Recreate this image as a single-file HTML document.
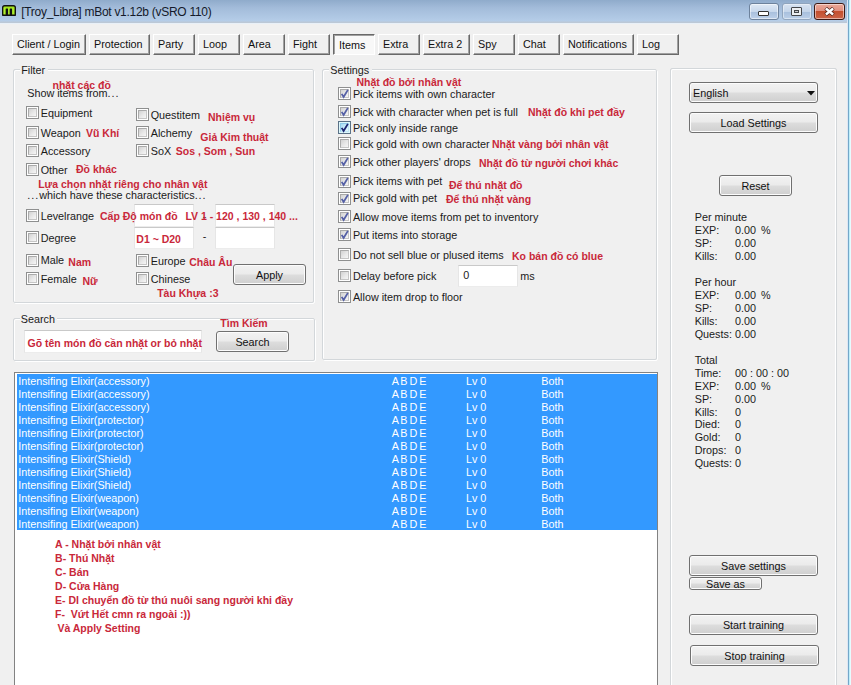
<!DOCTYPE html><html><head><meta charset="utf-8"><style>
*{margin:0;padding:0}
html,body{width:851px;height:685px;overflow:hidden;background:#f0f0f0}
body{position:relative;font-family:"Liberation Sans", sans-serif;}
.t{position:absolute;white-space:pre;}
#title{position:absolute;left:0;top:0;width:851px;height:24px;background:linear-gradient(180deg,#8fabcb 0px,#a3bcda 8px,#b5cde8 21px,#bcc8d6 22px,#bcc8d6 23px,#e8f0f8 23px,#e8f0f8 24px)}
.cap{position:absolute;top:3px;height:17px;border:1px solid #6d829c;border-radius:3px;box-sizing:border-box;background:linear-gradient(180deg,#dfe9f5 0%,#c8d8ec 50%,#a9c0dd 55%,#bdd1ea 100%);box-shadow:inset 0 0 0 1px rgba(255,255,255,.5)}
.cap.max{border-color:#8fa3bb;opacity:.9}
.cap.close{border-color:#3e1a14;background:linear-gradient(180deg,#eaa898 0%,#e09080 45%,#c4502f 50%,#cc6448 100%)}
.tab{position:absolute;box-sizing:border-box;background:#f0f0f0;border-top:1px solid #fff;border-left:1px solid #fff;border-right:1px solid #696969;border-bottom:1px solid #696969;box-shadow:inset -1px -1px 0 #a0a0a0}
.tab span{position:absolute;left:4px;top:0px;font-size:10.8px;line-height:19px;color:#111;white-space:pre}
.tab.pr{border-top:1px solid #696969;border-left:1px solid #696969;border-right:1px solid #fff;border-bottom:1px solid #fff;box-shadow:inset 1px 1px 0 #a0a0a0;background:#f8f8f8}
.tab.pr span{left:5px;top:1px}
.cb{position:absolute;width:13px;height:13px;box-sizing:border-box;border:1px solid #8e8f8f;background:#fff}
.cb::before{content:"";position:absolute;left:1px;top:1px;width:9px;height:9px;box-sizing:border-box;border:1px solid;border-color:#aaaaaa #c6c6c6 #c6c6c6 #aaaaaa;background:linear-gradient(135deg,#d2d2d2 0%,#e8e8e8 55%,#f6f6f6 100%)}
.cb svg{position:absolute;left:-1px;top:-1px}
.cb.hot{border-color:#5b7287;background:#def7fb}
.cb.hot::before{border-color:#8fcbe8 #c0e6f6 #c0e6f6 #8fcbe8;background:linear-gradient(135deg,#a6daf4 0%,#cdeefa 55%,#e6f8fd 100%)}
.btn{position:absolute;box-sizing:border-box;border:1px solid #707070;border-radius:3px;background:linear-gradient(180deg,#f2f2f2 0%,#ebebeb 48%,#dddddd 52%,#cfcfcf 100%);box-shadow:inset 0 0 0 1px #fcfcfc}
.btn span{position:absolute;left:0;right:0;top:1px;text-align:center;font-size:10.8px;color:#111;white-space:pre}
</style></head><body>
<div id="title"></div>
<svg style="position:absolute;left:2px;top:5px" width="14" height="11" viewBox="0 0 14 11">
<path d="M0.7 10.3 V2.6 Q0.7 0.7 2.6 0.7 H11.4 Q13.3 0.7 13.3 2.6 V10.3 H9.4 V4.2 H8.4 V10.3 H5.4 V4.2 H4.4 V10.3 Z" fill="#a4e61c" stroke="#111" stroke-width="1.4" stroke-linejoin="round"/>
<path d="M2.2 3 V9 M6.7 3.5 V9 M11 3.5 V9" stroke="#c8ff5a" stroke-width="0.8" opacity="0.6"/>
</svg>
<div class="t" style="left:21.2px;top:5.84px;font-size:12px;line-height:12px;color:#141a2a;letter-spacing:-0.28px">[Troy_Libra] mBot v1.12b (vSRO 110)</div>
<div class="cap" style="left:749px;width:30px"><div style="position:absolute;left:8px;top:7px;width:11px;height:5px;box-sizing:border-box;border:1px solid #333;background:#fff;border-radius:1px"></div></div>
<div class="cap max" style="left:782px;width:30px"><div style="position:absolute;left:8px;top:3px;width:11px;height:9px;box-sizing:border-box;border:1px solid #3a3a3a;background:#f4f4f4;border-radius:1px"><div style="position:absolute;left:2px;top:2px;width:5px;height:3px;box-sizing:border-box;border:1px solid #3a3a3a;background:#ccc"></div></div></div>
<div class="cap close" style="left:814px;width:31px"><svg style="position:absolute;left:9px;top:3px" width="12" height="10" viewBox="0 0 12 10"><path d="M1.6 1.2 L9.4 7.8 M9.4 1.2 L1.6 7.8" stroke="#4a2018" stroke-width="3.8"/><path d="M1.9 1.5 L9.1 7.5 M9.1 1.5 L1.9 7.5" stroke="#fff" stroke-width="2.4"/></svg></div>
<div style="position:absolute;left:847px;top:0px;width:4px;height:685px;background:linear-gradient(90deg,#dde7f5 0px,#dde7f5 1px,#74a8c8 1px,#74a8c8 2px,#bfeefa 2px,#bfeefa 3px,#e6fcff 3px)"></div>
<div class="tab" style="left:12px;top:34px;width:74px;height:21px"><span>Client / Login</span></div>
<div class="tab" style="left:89px;top:34px;width:61px;height:21px"><span>Protection</span></div>
<div class="tab" style="left:153px;top:34px;width:42px;height:21px"><span>Party</span></div>
<div class="tab" style="left:198px;top:34px;width:42px;height:21px"><span>Loop</span></div>
<div class="tab" style="left:243px;top:34px;width:42px;height:21px"><span>Area</span></div>
<div class="tab" style="left:288px;top:34px;width:42px;height:21px"><span>Fight</span></div>
<div class="tab pr" style="left:333px;top:34px;width:42px;height:21px"><span>Items</span></div>
<div class="tab" style="left:378px;top:34px;width:42px;height:21px"><span>Extra</span></div>
<div class="tab" style="left:423px;top:34px;width:47px;height:21px"><span>Extra 2</span></div>
<div class="tab" style="left:473px;top:34px;width:42px;height:21px"><span>Spy</span></div>
<div class="tab" style="left:518px;top:34px;width:42px;height:21px"><span>Chat</span></div>
<div class="tab" style="left:563px;top:34px;width:71px;height:21px"><span>Notifications</span></div>
<div class="tab" style="left:637px;top:34px;width:42px;height:21px"><span>Log</span></div>
<div style="position:absolute;left:14px;top:70px;width:301px;height:234px;border:1px solid #fff;border-radius:2px;box-sizing:border-box"></div>
<div style="position:absolute;left:13px;top:69px;width:301px;height:234px;border:1px solid #d3d7da;border-radius:2px;box-sizing:border-box"></div>
<div style="position:absolute;left:20px;top:65px;width:28px;height:8px;background:#f0f0f0"></div>
<div class="t" style="left:21.2px;top:64.86px;font-size:10.8px;line-height:10.8px;color:#1a1a1a;">Filter</div>
<div class="t" style="left:27.2px;top:87.66px;font-size:10.8px;line-height:10.8px;color:#1a1a1a;">Show items from<span style="letter-spacing:1px">...</span></div>
<div class="cb" style="left:26px;top:106px"></div>
<div class="t" style="left:40.7px;top:107.86px;font-size:10.8px;line-height:10.8px;color:#1a1a1a;">Equipment</div>
<div class="cb" style="left:26px;top:126px"></div>
<div class="t" style="left:40.7px;top:128.36px;font-size:10.8px;line-height:10.8px;color:#1a1a1a;">Weapon</div>
<div class="cb" style="left:26px;top:144px"></div>
<div class="t" style="left:40.7px;top:145.86px;font-size:10.8px;line-height:10.8px;color:#1a1a1a;">Accessory</div>
<div class="cb" style="left:26px;top:163px"></div>
<div class="t" style="left:40.7px;top:164.86px;font-size:10.8px;line-height:10.8px;color:#1a1a1a;">Other</div>
<div class="cb" style="left:136px;top:108px"></div>
<div class="t" style="left:150.7px;top:109.86px;font-size:10.8px;line-height:10.8px;color:#1a1a1a;">Questitem</div>
<div class="cb" style="left:136px;top:126px"></div>
<div class="t" style="left:150.7px;top:127.86px;font-size:10.8px;line-height:10.8px;color:#1a1a1a;">Alchemy</div>
<div class="cb" style="left:136px;top:144px"></div>
<div class="t" style="left:150.7px;top:145.86px;font-size:10.8px;line-height:10.8px;color:#1a1a1a;">SoX</div>
<div class="t" style="left:27.2px;top:189.86px;font-size:10.8px;line-height:10.8px;color:#1a1a1a;"><span style="letter-spacing:1px">...</span>which have these characteristics<span style="letter-spacing:1px">...</span></div>
<div class="cb" style="left:26px;top:209px"></div>
<div class="t" style="left:40.7px;top:210.86px;font-size:10.8px;line-height:10.8px;color:#1a1a1a;">Levelrange</div>
<div class="cb" style="left:26px;top:231px"></div>
<div class="t" style="left:40.7px;top:232.86px;font-size:10.8px;line-height:10.8px;color:#1a1a1a;">Degree</div>
<div class="cb" style="left:26px;top:254px"></div>
<div class="t" style="left:40.7px;top:255.36px;font-size:10.8px;line-height:10.8px;color:#1a1a1a;">Male</div>
<div class="cb" style="left:26px;top:272px"></div>
<div class="t" style="left:40.7px;top:273.86px;font-size:10.8px;line-height:10.8px;color:#1a1a1a;">Female</div>
<div class="cb" style="left:136px;top:254px"></div>
<div class="t" style="left:150.7px;top:255.86px;font-size:10.8px;line-height:10.8px;color:#1a1a1a;">Europe</div>
<div class="cb" style="left:136px;top:272px"></div>
<div class="t" style="left:150.7px;top:273.86px;font-size:10.8px;line-height:10.8px;color:#1a1a1a;">Chinese</div>
<div style="position:absolute;left:134px;top:204px;width:60px;height:23px;background:#fff;border-top:1px solid #c9c9c9;box-sizing:border-box;border-left:1px solid #e6e6e6;border-right:1px solid #e6e6e6;border-bottom:1px solid #ececec"></div>
<div style="position:absolute;left:215px;top:204px;width:60px;height:23px;background:#fff;border-top:1px solid #c9c9c9;box-sizing:border-box;border-left:1px solid #e6e6e6;border-right:1px solid #e6e6e6;border-bottom:1px solid #ececec"></div>
<div style="position:absolute;left:134px;top:227px;width:60px;height:22px;background:#fff;border-top:1px solid #c9c9c9;box-sizing:border-box;border-left:1px solid #e6e6e6;border-right:1px solid #e6e6e6;border-bottom:1px solid #ececec"></div>
<div style="position:absolute;left:215px;top:227px;width:60px;height:22px;background:#fff;border-top:1px solid #c9c9c9;box-sizing:border-box;border-left:1px solid #e6e6e6;border-right:1px solid #e6e6e6;border-bottom:1px solid #ececec"></div>
<div class="t" style="left:202.7px;top:210.86px;font-size:10.8px;line-height:10.8px;color:#1a1a1a;">-</div>
<div class="t" style="left:202.7px;top:230.86px;font-size:10.8px;line-height:10.8px;color:#1a1a1a;">-</div>
<div class="btn" style="left:233px;top:264px;width:73px;height:21px"><span style="line-height:19px">Apply</span></div>
<div style="position:absolute;left:14px;top:319px;width:302px;height:43px;border:1px solid #fff;border-radius:2px;box-sizing:border-box"></div>
<div style="position:absolute;left:13px;top:318px;width:302px;height:43px;border:1px solid #d3d7da;border-radius:2px;box-sizing:border-box"></div>
<div style="position:absolute;left:19.5px;top:314px;width:37px;height:8px;background:#f0f0f0"></div>
<div class="t" style="left:20.7px;top:313.56px;font-size:10.8px;line-height:10.8px;color:#1a1a1a;">Search</div>
<div style="position:absolute;left:24px;top:330px;width:178px;height:23px;background:#fff;border-top:1px solid #c9c9c9;box-sizing:border-box;border-left:1px solid #e6e6e6;border-right:1px solid #e6e6e6;border-bottom:1px solid #ececec"></div>
<div class="btn" style="left:216px;top:331px;width:73px;height:21px"><span style="line-height:19px">Search</span></div>
<div style="position:absolute;left:323px;top:70px;width:335px;height:291px;border:1px solid #fff;border-radius:2px;box-sizing:border-box"></div>
<div style="position:absolute;left:322px;top:69px;width:335px;height:291px;border:1px solid #d3d7da;border-radius:2px;box-sizing:border-box"></div>
<div style="position:absolute;left:329px;top:65px;width:43px;height:8px;background:#f0f0f0"></div>
<div class="t" style="left:330.2px;top:64.86px;font-size:10.8px;line-height:10.8px;color:#1a1a1a;">Settings</div>
<div class="cb" style="left:338px;top:87px"><svg width="13" height="13" viewBox="0 0 13 13"><path d="M3.7 6.9 L5.6 10 L9.9 2.9" fill="none" stroke="#5560a6" stroke-width="1.8" stroke-linecap="butt" stroke-linejoin="miter"/></svg></div>
<div class="t" style="left:352.9px;top:88.66px;font-size:10.8px;line-height:10.8px;color:#1a1a1a;">Pick items with own character</div>
<div class="cb" style="left:338px;top:105px"><svg width="13" height="13" viewBox="0 0 13 13"><path d="M3.7 6.9 L5.6 10 L9.9 2.9" fill="none" stroke="#5560a6" stroke-width="1.8" stroke-linecap="butt" stroke-linejoin="miter"/></svg></div>
<div class="t" style="left:352.9px;top:106.86px;font-size:10.8px;line-height:10.8px;color:#1a1a1a;">Pick with character when pet is full</div>
<div class="cb hot" style="left:338px;top:121px"><svg width="13" height="13" viewBox="0 0 13 13"><path d="M3.7 6.9 L5.6 10 L9.9 2.9" fill="none" stroke="#1c2470" stroke-width="1.8" stroke-linecap="butt" stroke-linejoin="miter"/></svg></div>
<div class="t" style="left:352.9px;top:122.86px;font-size:10.8px;line-height:10.8px;color:#1a1a1a;">Pick only inside range</div>
<div class="cb" style="left:338px;top:137px"></div>
<div class="t" style="left:352.9px;top:138.86px;font-size:10.8px;line-height:10.8px;color:#1a1a1a;">Pick gold with own character</div>
<div class="cb" style="left:338px;top:155px"><svg width="13" height="13" viewBox="0 0 13 13"><path d="M3.7 6.9 L5.6 10 L9.9 2.9" fill="none" stroke="#5560a6" stroke-width="1.8" stroke-linecap="butt" stroke-linejoin="miter"/></svg></div>
<div class="t" style="left:352.9px;top:156.86px;font-size:10.8px;line-height:10.8px;color:#1a1a1a;">Pick other players' drops</div>
<div class="cb" style="left:338px;top:175px"><svg width="13" height="13" viewBox="0 0 13 13"><path d="M3.7 6.9 L5.6 10 L9.9 2.9" fill="none" stroke="#5560a6" stroke-width="1.8" stroke-linecap="butt" stroke-linejoin="miter"/></svg></div>
<div class="t" style="left:352.9px;top:176.36px;font-size:10.8px;line-height:10.8px;color:#1a1a1a;">Pick items with pet</div>
<div class="cb" style="left:338px;top:192px"><svg width="13" height="13" viewBox="0 0 13 13"><path d="M3.7 6.9 L5.6 10 L9.9 2.9" fill="none" stroke="#5560a6" stroke-width="1.8" stroke-linecap="butt" stroke-linejoin="miter"/></svg></div>
<div class="t" style="left:352.9px;top:193.36px;font-size:10.8px;line-height:10.8px;color:#1a1a1a;">Pick gold with pet</div>
<div class="cb" style="left:338px;top:210px"><svg width="13" height="13" viewBox="0 0 13 13"><path d="M3.7 6.9 L5.6 10 L9.9 2.9" fill="none" stroke="#5560a6" stroke-width="1.8" stroke-linecap="butt" stroke-linejoin="miter"/></svg></div>
<div class="t" style="left:352.9px;top:211.86px;font-size:10.8px;line-height:10.8px;color:#1a1a1a;">Allow move items from pet to inventory</div>
<div class="cb" style="left:338px;top:228px"><svg width="13" height="13" viewBox="0 0 13 13"><path d="M3.7 6.9 L5.6 10 L9.9 2.9" fill="none" stroke="#5560a6" stroke-width="1.8" stroke-linecap="butt" stroke-linejoin="miter"/></svg></div>
<div class="t" style="left:352.9px;top:229.86px;font-size:10.8px;line-height:10.8px;color:#1a1a1a;">Put items into storage</div>
<div class="cb" style="left:338px;top:248px"></div>
<div class="t" style="left:352.9px;top:249.86px;font-size:10.8px;line-height:10.8px;color:#1a1a1a;">Do not sell blue or plused items</div>
<div class="cb" style="left:338px;top:269px"></div>
<div class="t" style="left:352.9px;top:270.86px;font-size:10.8px;line-height:10.8px;color:#1a1a1a;">Delay before pick</div>
<div class="cb" style="left:338px;top:290px"><svg width="13" height="13" viewBox="0 0 13 13"><path d="M3.7 6.9 L5.6 10 L9.9 2.9" fill="none" stroke="#5560a6" stroke-width="1.8" stroke-linecap="butt" stroke-linejoin="miter"/></svg></div>
<div class="t" style="left:352.9px;top:291.86px;font-size:10.8px;line-height:10.8px;color:#1a1a1a;">Allow item drop to floor</div>
<div style="position:absolute;left:458px;top:265px;width:60px;height:22px;background:#fff;border-top:1px solid #c9c9c9;box-sizing:border-box;border-left:1px solid #e6e6e6;border-right:1px solid #e6e6e6;border-bottom:1px solid #ececec"></div>
<div class="t" style="left:463.2px;top:269.86px;font-size:10.8px;line-height:10.8px;color:#1a1a1a;">0</div>
<div class="t" style="left:520.2px;top:270.86px;font-size:10.8px;line-height:10.8px;color:#1a1a1a;">ms</div>
<div style="position:absolute;left:671px;top:69px;width:165px;height:700px;border:1px solid #fff;border-radius:2px;box-sizing:border-box"></div>
<div style="position:absolute;left:670px;top:68px;width:167px;height:700px;border:1px solid #d3d7da;border-radius:2px;box-sizing:border-box"></div>
<div class="btn" style="left:689px;top:82px;width:129px;height:21px"><span style="text-align:left;padding-left:3px;line-height:18px">English</span><svg style="position:absolute;left:117px;top:8px" width="8" height="5"><path d="M0 0 H8 L4 4.5 Z" fill="#111"/></svg></div>
<div class="btn" style="left:689px;top:112px;width:129px;height:21px"><span style="line-height:19px">Load Settings</span></div>
<div class="btn" style="left:719px;top:175px;width:73px;height:21px"><span style="line-height:19px">Reset</span></div>
<div class="t" style="left:694.7px;top:212.06px;font-size:10.8px;line-height:10.8px;color:#1a1a1a;">Per minute</div>
<div class="t" style="left:694.7px;top:224.96px;font-size:10.8px;line-height:10.8px;color:#1a1a1a;">EXP:</div>
<div class="t" style="left:734.9000000000001px;top:224.96px;font-size:10.8px;line-height:10.8px;color:#1a1a1a;">0.00<span style="margin-left:2px"> %</span></div>
<div class="t" style="left:694.7px;top:237.86px;font-size:10.8px;line-height:10.8px;color:#1a1a1a;">SP:</div>
<div class="t" style="left:734.9000000000001px;top:237.86px;font-size:10.8px;line-height:10.8px;color:#1a1a1a;">0.00</div>
<div class="t" style="left:694.7px;top:250.76px;font-size:10.8px;line-height:10.8px;color:#1a1a1a;">Kills:</div>
<div class="t" style="left:734.9000000000001px;top:250.76px;font-size:10.8px;line-height:10.8px;color:#1a1a1a;">0.00</div>
<div class="t" style="left:694.7px;top:277.06px;font-size:10.8px;line-height:10.8px;color:#1a1a1a;">Per hour</div>
<div class="t" style="left:694.7px;top:289.96px;font-size:10.8px;line-height:10.8px;color:#1a1a1a;">EXP:</div>
<div class="t" style="left:734.9000000000001px;top:289.96px;font-size:10.8px;line-height:10.8px;color:#1a1a1a;">0.00<span style="margin-left:2px"> %</span></div>
<div class="t" style="left:694.7px;top:302.86px;font-size:10.8px;line-height:10.8px;color:#1a1a1a;">SP:</div>
<div class="t" style="left:734.9000000000001px;top:302.86px;font-size:10.8px;line-height:10.8px;color:#1a1a1a;">0.00</div>
<div class="t" style="left:694.7px;top:315.76px;font-size:10.8px;line-height:10.8px;color:#1a1a1a;">Kills:</div>
<div class="t" style="left:734.9000000000001px;top:315.76px;font-size:10.8px;line-height:10.8px;color:#1a1a1a;">0.00</div>
<div class="t" style="left:694.7px;top:328.76px;font-size:10.8px;line-height:10.8px;color:#1a1a1a;">Quests:</div>
<div class="t" style="left:734.9000000000001px;top:328.76px;font-size:10.8px;line-height:10.8px;color:#1a1a1a;">0.00</div>
<div class="t" style="left:694.7px;top:354.86px;font-size:10.8px;line-height:10.8px;color:#1a1a1a;">Total</div>
<div class="t" style="left:694.7px;top:367.86px;font-size:10.8px;line-height:10.8px;color:#1a1a1a;">Time:</div>
<div class="t" style="left:734.9000000000001px;top:367.86px;font-size:10.8px;line-height:10.8px;color:#1a1a1a;">00 : 00 : 00</div>
<div class="t" style="left:694.7px;top:380.76px;font-size:10.8px;line-height:10.8px;color:#1a1a1a;">EXP:</div>
<div class="t" style="left:734.9000000000001px;top:380.76px;font-size:10.8px;line-height:10.8px;color:#1a1a1a;">0.00<span style="margin-left:2px"> %</span></div>
<div class="t" style="left:694.7px;top:393.66px;font-size:10.8px;line-height:10.8px;color:#1a1a1a;">SP:</div>
<div class="t" style="left:734.9000000000001px;top:393.66px;font-size:10.8px;line-height:10.8px;color:#1a1a1a;">0.00</div>
<div class="t" style="left:694.7px;top:406.56px;font-size:10.8px;line-height:10.8px;color:#1a1a1a;">Kills:</div>
<div class="t" style="left:734.9000000000001px;top:406.56px;font-size:10.8px;line-height:10.8px;color:#1a1a1a;">0</div>
<div class="t" style="left:694.7px;top:419.46px;font-size:10.8px;line-height:10.8px;color:#1a1a1a;">Died:</div>
<div class="t" style="left:734.9000000000001px;top:419.46px;font-size:10.8px;line-height:10.8px;color:#1a1a1a;">0</div>
<div class="t" style="left:694.7px;top:432.36px;font-size:10.8px;line-height:10.8px;color:#1a1a1a;">Gold:</div>
<div class="t" style="left:734.9000000000001px;top:432.36px;font-size:10.8px;line-height:10.8px;color:#1a1a1a;">0</div>
<div class="t" style="left:694.7px;top:445.26px;font-size:10.8px;line-height:10.8px;color:#1a1a1a;">Drops:</div>
<div class="t" style="left:734.9000000000001px;top:445.26px;font-size:10.8px;line-height:10.8px;color:#1a1a1a;">0</div>
<div class="t" style="left:694.7px;top:458.16px;font-size:10.8px;line-height:10.8px;color:#1a1a1a;">Quests:</div>
<div class="t" style="left:734.9000000000001px;top:458.16px;font-size:10.8px;line-height:10.8px;color:#1a1a1a;">0</div>
<div class="btn" style="left:689px;top:555px;width:129px;height:21px"><span style="line-height:19px">Save settings</span></div>
<div class="btn" style="left:689px;top:577px;width:73px;height:13px"><span style="line-height:11px">Save as</span></div>
<div class="btn" style="left:689px;top:614px;width:129px;height:21px"><span style="line-height:19px">Start training</span></div>
<div class="btn" style="left:690px;top:645px;width:129px;height:21px"><span style="line-height:19px">Stop training</span></div>
<div style="position:absolute;left:14px;top:372px;width:644px;height:320px;background:#fff;border:1px solid #828282;box-sizing:border-box;border-right-width:1px"></div>
<div style="position:absolute;left:17px;top:374px;width:640px;height:156px;background:#3399ff"></div>
<div class="t" style="left:18.2px;top:375.86px;font-size:10.8px;line-height:10.8px;color:#fff;">Intensifing Elixir(accessory)</div>
<div class="t" style="left:391.7px;top:375.86px;font-size:10.8px;line-height:10.8px;color:#fff;word-spacing:-1px">A B D E</div>
<div class="t" style="left:465.9px;top:375.86px;font-size:10.8px;line-height:10.8px;color:#fff;">Lv 0</div>
<div class="t" style="left:541.2px;top:375.86px;font-size:10.8px;line-height:10.8px;color:#fff;">Both</div>
<div class="t" style="left:18.2px;top:388.86px;font-size:10.8px;line-height:10.8px;color:#fff;">Intensifing Elixir(accessory)</div>
<div class="t" style="left:391.7px;top:388.86px;font-size:10.8px;line-height:10.8px;color:#fff;word-spacing:-1px">A B D E</div>
<div class="t" style="left:465.9px;top:388.86px;font-size:10.8px;line-height:10.8px;color:#fff;">Lv 0</div>
<div class="t" style="left:541.2px;top:388.86px;font-size:10.8px;line-height:10.8px;color:#fff;">Both</div>
<div class="t" style="left:18.2px;top:401.86px;font-size:10.8px;line-height:10.8px;color:#fff;">Intensifing Elixir(accessory)</div>
<div class="t" style="left:391.7px;top:401.86px;font-size:10.8px;line-height:10.8px;color:#fff;word-spacing:-1px">A B D E</div>
<div class="t" style="left:465.9px;top:401.86px;font-size:10.8px;line-height:10.8px;color:#fff;">Lv 0</div>
<div class="t" style="left:541.2px;top:401.86px;font-size:10.8px;line-height:10.8px;color:#fff;">Both</div>
<div class="t" style="left:18.2px;top:414.86px;font-size:10.8px;line-height:10.8px;color:#fff;">Intensifing Elixir(protector)</div>
<div class="t" style="left:391.7px;top:414.86px;font-size:10.8px;line-height:10.8px;color:#fff;word-spacing:-1px">A B D E</div>
<div class="t" style="left:465.9px;top:414.86px;font-size:10.8px;line-height:10.8px;color:#fff;">Lv 0</div>
<div class="t" style="left:541.2px;top:414.86px;font-size:10.8px;line-height:10.8px;color:#fff;">Both</div>
<div class="t" style="left:18.2px;top:427.86px;font-size:10.8px;line-height:10.8px;color:#fff;">Intensifing Elixir(protector)</div>
<div class="t" style="left:391.7px;top:427.86px;font-size:10.8px;line-height:10.8px;color:#fff;word-spacing:-1px">A B D E</div>
<div class="t" style="left:465.9px;top:427.86px;font-size:10.8px;line-height:10.8px;color:#fff;">Lv 0</div>
<div class="t" style="left:541.2px;top:427.86px;font-size:10.8px;line-height:10.8px;color:#fff;">Both</div>
<div class="t" style="left:18.2px;top:440.86px;font-size:10.8px;line-height:10.8px;color:#fff;">Intensifing Elixir(protector)</div>
<div class="t" style="left:391.7px;top:440.86px;font-size:10.8px;line-height:10.8px;color:#fff;word-spacing:-1px">A B D E</div>
<div class="t" style="left:465.9px;top:440.86px;font-size:10.8px;line-height:10.8px;color:#fff;">Lv 0</div>
<div class="t" style="left:541.2px;top:440.86px;font-size:10.8px;line-height:10.8px;color:#fff;">Both</div>
<div class="t" style="left:18.2px;top:453.86px;font-size:10.8px;line-height:10.8px;color:#fff;">Intensifing Elixir(Shield)</div>
<div class="t" style="left:391.7px;top:453.86px;font-size:10.8px;line-height:10.8px;color:#fff;word-spacing:-1px">A B D E</div>
<div class="t" style="left:465.9px;top:453.86px;font-size:10.8px;line-height:10.8px;color:#fff;">Lv 0</div>
<div class="t" style="left:541.2px;top:453.86px;font-size:10.8px;line-height:10.8px;color:#fff;">Both</div>
<div class="t" style="left:18.2px;top:466.86px;font-size:10.8px;line-height:10.8px;color:#fff;">Intensifing Elixir(Shield)</div>
<div class="t" style="left:391.7px;top:466.86px;font-size:10.8px;line-height:10.8px;color:#fff;word-spacing:-1px">A B D E</div>
<div class="t" style="left:465.9px;top:466.86px;font-size:10.8px;line-height:10.8px;color:#fff;">Lv 0</div>
<div class="t" style="left:541.2px;top:466.86px;font-size:10.8px;line-height:10.8px;color:#fff;">Both</div>
<div class="t" style="left:18.2px;top:479.86px;font-size:10.8px;line-height:10.8px;color:#fff;">Intensifing Elixir(Shield)</div>
<div class="t" style="left:391.7px;top:479.86px;font-size:10.8px;line-height:10.8px;color:#fff;word-spacing:-1px">A B D E</div>
<div class="t" style="left:465.9px;top:479.86px;font-size:10.8px;line-height:10.8px;color:#fff;">Lv 0</div>
<div class="t" style="left:541.2px;top:479.86px;font-size:10.8px;line-height:10.8px;color:#fff;">Both</div>
<div class="t" style="left:18.2px;top:492.86px;font-size:10.8px;line-height:10.8px;color:#fff;">Intensifing Elixir(weapon)</div>
<div class="t" style="left:391.7px;top:492.86px;font-size:10.8px;line-height:10.8px;color:#fff;word-spacing:-1px">A B D E</div>
<div class="t" style="left:465.9px;top:492.86px;font-size:10.8px;line-height:10.8px;color:#fff;">Lv 0</div>
<div class="t" style="left:541.2px;top:492.86px;font-size:10.8px;line-height:10.8px;color:#fff;">Both</div>
<div class="t" style="left:18.2px;top:505.86px;font-size:10.8px;line-height:10.8px;color:#fff;">Intensifing Elixir(weapon)</div>
<div class="t" style="left:391.7px;top:505.86px;font-size:10.8px;line-height:10.8px;color:#fff;word-spacing:-1px">A B D E</div>
<div class="t" style="left:465.9px;top:505.86px;font-size:10.8px;line-height:10.8px;color:#fff;">Lv 0</div>
<div class="t" style="left:541.2px;top:505.86px;font-size:10.8px;line-height:10.8px;color:#fff;">Both</div>
<div class="t" style="left:18.2px;top:518.86px;font-size:10.8px;line-height:10.8px;color:#fff;">Intensifing Elixir(weapon)</div>
<div class="t" style="left:391.7px;top:518.86px;font-size:10.8px;line-height:10.8px;color:#fff;word-spacing:-1px">A B D E</div>
<div class="t" style="left:465.9px;top:518.86px;font-size:10.8px;line-height:10.8px;color:#fff;">Lv 0</div>
<div class="t" style="left:541.2px;top:518.86px;font-size:10.8px;line-height:10.8px;color:#fff;">Both</div>
<div class="t" style="left:52.5px;top:79.91px;font-size:10.5px;line-height:10.5px;color:#c9283a;font-weight:bold;">nhặt các đồ</div>
<div class="t" style="left:86px;top:127.91px;font-size:10.5px;line-height:10.5px;color:#c9283a;font-weight:bold;">Vũ Khí</div>
<div class="t" style="left:76px;top:164.11px;font-size:10.5px;line-height:10.5px;color:#c9283a;font-weight:bold;">Đồ khác</div>
<div class="t" style="left:208px;top:111.81px;font-size:10.5px;line-height:10.5px;color:#c9283a;font-weight:bold;">Nhiệm vụ</div>
<div class="t" style="left:200.3px;top:132.11px;font-size:10.5px;line-height:10.5px;color:#c9283a;font-weight:bold;">Giả Kim thuật</div>
<div class="t" style="left:175.8px;top:145.91px;font-size:10.5px;line-height:10.5px;color:#c9283a;font-weight:bold;">Sos , Som , Sun</div>
<div class="t" style="left:38.2px;top:178.61px;font-size:10.5px;line-height:10.5px;color:#c9283a;font-weight:bold;">Lựa chọn nhặt riêng cho nhân vật</div>
<div class="t" style="left:100px;top:210.91px;font-size:10.5px;line-height:10.5px;color:#c9283a;font-weight:bold;">Cấp Độ món đồ</div>
<div class="t" style="left:185.4px;top:210.71px;font-size:10.5px;line-height:10.5px;color:#c9283a;font-weight:bold;">LV 1 - 120 , 130 , 140 ...</div>
<div class="t" style="left:136.3px;top:234.11px;font-size:10.5px;line-height:10.5px;color:#c9283a;font-weight:bold;">D1 ~ D20</div>
<div class="t" style="left:68.3px;top:257.11px;font-size:10.5px;line-height:10.5px;color:#c9283a;font-weight:bold;">Nam</div>
<div class="t" style="left:82.4px;top:276.11px;font-size:10.5px;line-height:10.5px;color:#c9283a;font-weight:bold;">Nữ</div>
<div class="t" style="left:189.2px;top:256.61px;font-size:10.5px;line-height:10.5px;color:#c9283a;font-weight:bold;">Châu Âu</div>
<div class="t" style="left:157.2px;top:288.41px;font-size:10.5px;line-height:10.5px;color:#c9283a;font-weight:bold;">Tàu Khựa :3</div>
<div class="t" style="left:27.5px;top:337.81px;font-size:10.5px;line-height:10.5px;color:#c9283a;font-weight:bold;">Gõ tên món đồ cần nhặt or bỏ nhặt</div>
<div class="t" style="left:220.3px;top:318.01px;font-size:10.5px;line-height:10.5px;color:#c9283a;font-weight:bold;">Tìm Kiếm</div>
<div class="t" style="left:356.4px;top:76.61px;font-size:10.5px;line-height:10.5px;color:#c9283a;font-weight:bold;">Nhặt đồ bởi nhân vật</div>
<div class="t" style="left:528px;top:106.81px;font-size:10.5px;line-height:10.5px;color:#c9283a;font-weight:bold;">Nhặt đồ khi pet đầy</div>
<div class="t" style="left:492px;top:138.81px;font-size:10.5px;line-height:10.5px;color:#c9283a;font-weight:bold;">Nhặt vàng bởi nhân vật</div>
<div class="t" style="left:479px;top:157.61px;font-size:10.5px;line-height:10.5px;color:#c9283a;font-weight:bold;">Nhặt đồ từ người chơi khác</div>
<div class="t" style="left:449px;top:179.61px;font-size:10.5px;line-height:10.5px;color:#c9283a;font-weight:bold;">Để thú nhặt đồ</div>
<div class="t" style="left:446px;top:193.61px;font-size:10.5px;line-height:10.5px;color:#c9283a;font-weight:bold;">Để thú nhặt vàng</div>
<div class="t" style="left:512px;top:250.61px;font-size:10.5px;line-height:10.5px;color:#c9283a;font-weight:bold;">Ko bán đồ có blue</div>
<div class="t" style="left:55.1px;top:538.91px;font-size:10.5px;line-height:10.5px;color:#c9283a;font-weight:bold;">A - Nhặt bởi nhân vật</div>
<div class="t" style="left:55.1px;top:552.99px;font-size:10.5px;line-height:10.5px;color:#c9283a;font-weight:bold;">B- Thú Nhặt</div>
<div class="t" style="left:55.1px;top:567.07px;font-size:10.5px;line-height:10.5px;color:#c9283a;font-weight:bold;">C- Bán</div>
<div class="t" style="left:55.1px;top:581.15px;font-size:10.5px;line-height:10.5px;color:#c9283a;font-weight:bold;">D- Cửa Hàng</div>
<div class="t" style="left:55.1px;top:595.23px;font-size:10.5px;line-height:10.5px;color:#c9283a;font-weight:bold;">E- DI chuyển đồ từ thú nuôi sang người khi đầy</div>
<div class="t" style="left:55.1px;top:609.31px;font-size:10.5px;line-height:10.5px;color:#c9283a;font-weight:bold;">F-&nbsp; Vứt Hết cmn ra ngoài :))</div>
<div class="t" style="left:57.4px;top:623.41px;font-size:10.5px;line-height:10.5px;color:#c9283a;font-weight:bold;">Và Apply Setting</div>
</body></html>
